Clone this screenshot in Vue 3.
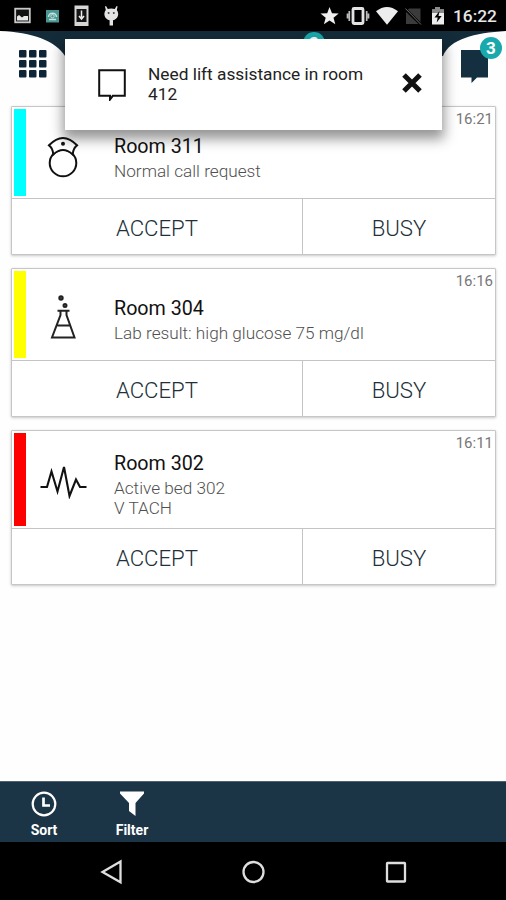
<script setup>
const calls = [
  { room: 'Room 311', lines: ['Normal call request'], time: '16:21', color: '#00ffff', icon: 'nurse' },
  { room: 'Room 304', lines: ['Lab result: high glucose 75 mg/dl'], time: '16:16', color: '#ffff00', icon: 'lab' },
  { room: 'Room 302', lines: ['Active bed 302', 'V TACH'], time: '16:11', color: '#ff0000', icon: 'pulse' },
]
</script>

<template>
  <div class="phone">
    <div class="status">
      <svg class="status-left" width="130" height="31" viewBox="0 0 130 31">
        <rect x="15.2" y="8.7" width="14.6" height="13.6" fill="#111" stroke="#c9c9c9" stroke-width="1.8" />
        <path d="M17 20.5v-4l2-1.5 3 2.5 2-1.5h4v4.5z" fill="#e8e8e8" />
        <rect x="46" y="10" width="13" height="12.5" fill="#4a9692" />
        <path d="M48.500 17a4 3.700 0 1 1 8 0M49 19.500h7" fill="none" stroke="#c5e2df" stroke-width="1.500" />
        <circle cx="52.500" cy="16.300" r="1.700" fill="none" stroke="#c5e2df" stroke-width="1" />
        <rect x="75.5" y="6.5" width="12" height="18.5" fill="#151515" stroke="#d6d6d6" stroke-width="2" />
        <path d="M75 7.5h13M75 23.5h13" stroke="#d6d6d6" stroke-width="3" />
        <path d="M81.5 10.5v7M79 16l2.5 3 2.5-3" fill="none" stroke="#eee" stroke-width="1.5" />
        <path d="M106 6l1.800 3c2-.7 5-.7 7 0l1.800-3 1 .5-.8 3.500c3 4 .9 9.500-3.800 10.200V25.500h-3.400v-5.300c-4.700-.7-6.800-6.200-3.800-10.200l-.8-3.500z" fill="#e3e3e3" />
        <circle cx="108.600" cy="13" r="1" fill="#444" /><circle cx="113.800" cy="13" r="1" fill="#444" />
      </svg>
      <div class="status-right">
        <svg width="130" height="31" viewBox="0 0 130 31">
          <path d="M9.500 7l2.500 6.300 6.700.3-5.200 4.200 1.800 6.500-5.800-3.700-5.600 3.700 1.800-6.500L.5 13.600l6.700-.3z" fill="#efefef" />
          <rect x="33" y="8.500" width="10" height="15" rx="1" fill="none" stroke="#e3e3e3" stroke-width="2.800" />
          <path d="M29.300 11v10M46.700 11v10M27.500 13.500v5M48.500 13.500v5" stroke="#bcbcbc" stroke-width="1.700" />
          <path d="M56 11.300q11-8.800 22 0L67 24.800z" fill="#ededed" />
          <path d="M89 8.500h11.500V24H86V12z" fill="#3b3b3b" />
          <path d="M85 9l16 15.500" stroke="#050505" stroke-width="3" /><path d="M85.500 8.500L101 24.500" stroke="#656565" stroke-width="1" />
          <path d="M112 9.500h3V7h5v2.500h4V24.500h-12z" fill="#ededed" />
          <path d="M112 9.500h3V7h5v2.500h4V13h-12z" fill="#8a8a8a" />
          <path d="M119.500 11l-5 6.500h3.200l-1 5 5-6.500h-3.200z" fill="#000" />
        </svg>
        <span class="clock">16:22</span>
      </div>
    </div>

    <header class="header">
      <svg class="header-shape" width="506" height="75" viewBox="0 0 506 75">
        <path d="M0 0H506C474 2 450 8 443 25H65C56 10 32 1 0 0z" fill="#142c3a" />
      </svg>
      <svg class="menu" width="28" height="28" viewBox="0 0 28 28" fill="#0d2536">
        <template v-for="r in 3" :key="r">
          <rect v-for="c in 3" :key="c" :x="(c - 1) * 10" :y="(r - 1) * 10" width="7.500" height="7.500" rx="1" />
        </template>
      </svg>
      <svg class="message" width="28" height="34" viewBox="0 0 28 34">
        <path d="M1 0h27v27.500H17L11.500 33v-5.500H1z" fill="#142f40" />
      </svg>
      <span class="badge">3</span>
      <span class="badge hidden-badge">3</span>
    </header>

    <div class="toast">
      <svg width="28" height="32" viewBox="0 0 28 32">
        <path d="M1.200 1.200h25.600V26.800H14.800L12 30.500v-3.700H1.200z" fill="none" stroke="#111" stroke-width="2" />
      </svg>
      <p>Need lift assistance in room 412</p>
      <svg class="close" width="20" height="20" viewBox="0 0 20 20">
        <path d="M2 2l16 16M18 2L2 18" stroke="#111" stroke-width="5" />
      </svg>
    </div>

    <main class="list">
      <article v-for="call in calls" :key="call.room" class="card" :class="{ tall: call.lines.length > 1 }">
        <div class="body">
          <div class="stripe" :style="{ background: call.color }"></div>
          <div class="icon">
            <svg v-if="call.icon === 'nurse'" width="48" height="42" viewBox="0 0 48 42" fill="none" stroke="#111" stroke-width="2">
              <circle cx="24" cy="27" r="13.300" />
              <path d="M14.300 18.500C14 14.500 12.500 11 10 9.300Q24-5.500 38 9.300C35.500 11 34 14.500 33.700 18.500Q24 9.500 14.300 18.500z" fill="#fff" />
              <circle cx="24" cy="7.800" r="2" fill="#111" stroke="none" />
            </svg>
            <svg v-else-if="call.icon === 'lab'" class="lab" width="48" height="46" viewBox="0 0 48 46" fill="none" stroke="#222" stroke-width="2">
              <path d="M18.500 16.700h12M21.500 17v4L13 43.500h22.500L27.500 21v-4M18.500 31.500h12" />
              <circle cx="22" cy="4" r="1.700" fill="#555" />
              <circle cx="26" cy="11.500" r="1.500" fill="#777" />
            </svg>
            <svg v-else width="48" height="34" viewBox="0 0 48 34" fill="none" stroke="#111" stroke-width="2.100">
              <path d="M1.500 22H8l4.500-15.500 6 20L25 2l5.500 29L37 14.500l4 7.500h6.500" />
            </svg>
          </div>
          <div class="info">
            <h2>{{ call.room }}</h2>
            <p v-for="line in call.lines" :key="line">{{ line }}</p>
          </div>
          <time>{{ call.time }}</time>
        </div>
        <div class="actions">
          <button class="accept">ACCEPT</button>
          <button class="busy">BUSY</button>
        </div>
      </article>
    </main>

    <footer class="toolbar">
      <div class="tool">
        <svg width="26" height="26" viewBox="0 0 26 26" fill="none" stroke="#fff">
          <circle cx="13" cy="13" r="11.300" stroke-width="2.200" />
          <path d="M12.500 6.500v8h6.500" stroke-width="2.700" />
        </svg>
        <span>Sort</span>
      </div>
      <div class="tool">
        <svg width="26" height="26" viewBox="0 0 26 26">
          <path d="M1 .5h24v2L16.500 12v13L10 20v-8L1 2.500z" fill="#fff" />
        </svg>
        <span>Filter</span>
      </div>
    </footer>

    <nav class="nav">
      <svg width="506" height="58" viewBox="0 0 506 58" fill="none" stroke="#dedede" stroke-width="2.300">
        <path d="M120.500 19.500v20.800L102.500 30z" />
        <circle cx="253.500" cy="30" r="10" />
        <rect x="387" y="21" width="18" height="18.500" rx=".5" />
      </svg>
    </nav>
  </div>
</template>

<style>
body {
  margin: 0;
}
</style>

<style scoped>
.phone {
  position: relative;
  display: flex;
  flex-direction: column;
  width: 506px;
  height: 900px;
  overflow: hidden;
  background: #fefefe;
  font-family: Roboto, sans-serif;
}

.status {
  display: flex;
  justify-content: space-between;
  flex: none;
  height: 31px;
  background: #000;
}

.status-right {
  display: flex;
  width: 186px;
}

.status-right svg {
  flex: none;
}

.clock {
  margin-left: 3px;
  color: #e6e6e6;
  font-size: 17.300px;
  font-weight: 500;
  line-height: 33px;
}

.header {
  position: relative;
  display: flex;
  align-items: flex-start;
  justify-content: space-between;
  flex: none;
  box-sizing: border-box;
  height: 75px;
  padding: 19px 18px 0 19px;
}

.header-shape {
  position: absolute;
  top: 0;
  left: 0;
}

.badge {
  position: absolute;
  top: 6px;
  left: 480px;
  width: 22px;
  height: 22px;
  border-radius: 50%;
  background: #19a9ad;
  color: #fff;
  font-size: 17px;
  font-weight: 700;
  line-height: 22px;
  text-align: center;
}

.hidden-badge {
  top: 1px;
  left: 303px;
}

.toast {
  position: absolute;
  z-index: 2;
  top: 39px;
  left: 65px;
  display: flex;
  box-sizing: border-box;
  width: 377px;
  height: 91px;
  padding: 30px 20px 0 33px;
  background: #fff;
  box-shadow: 0 7px 12px 2px rgba(0, 0, 0, 0.42);
}

.toast p {
  flex: none;
  width: 230px;
  margin: -5px 0 0 22px;
  color: #222;
  font-size: 17.300px;
  line-height: 20px;
}

.close {
  margin: 4px 0 0 auto;
}

.list {
  display: flex;
  flex: 1;
  flex-direction: column;
  gap: 13px;
  padding: 0 10px 0 11px;
}

.card {
  display: flex;
  flex-direction: column;
  box-sizing: border-box;
  height: 149px;
  border: 1px solid #c6c6c6;
  border-radius: 1px;
  background: #fff;
  box-shadow: 0 1px 3px rgba(0, 0, 0, 0.22);
}

.tall {
  height: 155px;
}

.body {
  display: flex;
  flex: 1;
  align-items: center;
  padding: 2px;
}

.stripe {
  align-self: stretch;
  width: 12px;
}

.icon {
  display: flex;
  align-items: center;
  justify-content: center;
  width: 74px;
  padding-top: 8px;
}

.lab {
  margin-top: -4px;
}

.tall .icon {
  padding-top: 4px;
}

.info {
  flex: 1;
  padding: 10px 0 0 14px;
}

h2 {
  margin: 0 0 3px;
  color: #111;
  font-size: 19.700px;
  font-weight: 400;
  line-height: 23px;
}

.info p {
  margin: 0;
  color: #505050;
  font-size: 17.200px;
  font-weight: 300;
  line-height: 20px;
}

time {
  align-self: flex-start;
  color: #777;
  font-size: 15px;
  line-height: 20px;
}

.actions {
  display: flex;
  box-sizing: border-box;
  height: 56px;
  border-top: 1px solid #c4c4c4;
}

button {
  padding: 2px 0 0;
  border: 0;
  background: none;
  color: #22303a;
  font-family: inherit;
  font-size: 22.200px;
  font-weight: 300;
}

.accept {
  width: 290px;
}

.busy {
  flex: 1;
  border-left: 1px solid #c4c4c4;
}

.toolbar {
  display: flex;
  flex: none;
  box-sizing: border-box;
  height: 61px;
  border-top: 1px solid #50666f;
  background: #1b3546;
}

.tool {
  display: flex;
  flex-direction: column;
  align-items: center;
  width: 88px;
  padding-top: 9px;
  color: #fff;
  font-size: 14px;
  font-weight: 700;
}

.tool span {
  margin-top: 4px;
  line-height: 18px;
}

.nav {
  flex: none;
  height: 58px;
  background: #000;
}
</style>
